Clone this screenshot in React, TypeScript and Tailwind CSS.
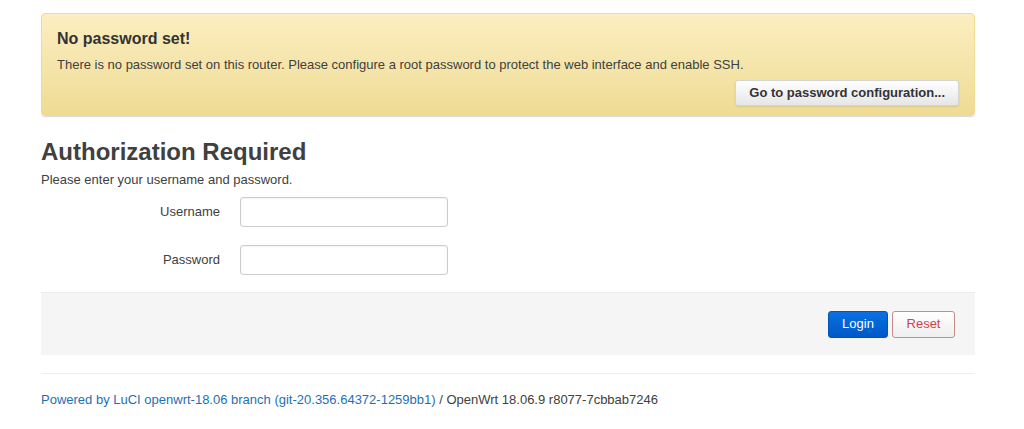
import React from 'react';

const App: React.FC = () => {
  return (
    <div className="min-h-screen bg-white font-['Liberation_Sans',Arial,sans-serif] text-[#404040]">
      <div className="mx-[41px] w-[934px] pt-[13px]">

        {/* alert */}
        <div className="rounded-[4px] border border-[#eedc94] bg-gradient-to-b from-[#fceec1] to-[#eedc94] px-[15px] pt-[16px] pb-[9px] shadow-[0_1px_1px_rgba(0,0,0,0.15)]">
          <h4 className="text-[16px] font-bold leading-[18px] text-[#333]">No password set!</h4>
          <p className="mt-[9px] text-[13px] leading-[16px] text-[#404040]">
            There is no password set on this router. Please configure a root password to protect the web interface and enable SSH.
          </p>
          <div className="mt-[7px] flex justify-end">
            <button className="h-[26px] rounded-[3px] border border-[#d4d4d4] bg-gradient-to-b from-white to-[#e6e6e6] px-[13px] text-[13px] font-bold text-[#333] shadow-[0_1px_2px_rgba(0,0,0,0.1)]">
              Go to password configuration...
            </button>
          </div>
        </div>

        {/* heading */}
        <h2 className="mt-[22px] text-[24px] font-bold leading-[28px] text-[#404040]">Authorization Required</h2>
        <p className="mt-[6px] text-[13px] leading-[16px]">Please enter your username and password.</p>

        {/* form */}
        <div className="mt-[9px] flex flex-col gap-[18px]">
          <div className="flex items-center">
            <label className="w-[179px] text-right text-[13px] text-[#404040]">Username</label>
            <input className="ml-[20px] h-[30px] w-[208px] rounded-[3px] border border-[#ccc] bg-white px-2 text-[13px] shadow-[inset_0_1px_2px_rgba(0,0,0,0.05)] outline-none" />
          </div>
          <div className="flex items-center">
            <label className="w-[179px] text-right text-[13px] text-[#404040]">Password</label>
            <input type="password" className="ml-[20px] h-[30px] w-[208px] rounded-[3px] border border-[#ccc] bg-white px-2 text-[13px] shadow-[inset_0_1px_2px_rgba(0,0,0,0.05)] outline-none" />
          </div>
        </div>

        {/* actions */}
        <div className="mt-[17px] flex h-[63px] items-center justify-end gap-[4px] border-t border-[#ececec] bg-[#f5f5f5] pr-[20px]">
          <button className="h-[27px] w-[60px] rounded-[3px] border border-[#0055b5] bg-gradient-to-b from-[#0a70e0] to-[#0058c8] text-[13px] text-white">
            Login
          </button>
          <button className="h-[27px] w-[63px] rounded-[3px] border border-[#c98a8a] bg-gradient-to-b from-white to-[#efefef] text-[13px] text-[#c44]">
            Reset
          </button>
        </div>

        {/* footer */}
        <div className="mt-[18px] border-t border-[#eee] pt-[18px] text-[13px] leading-[16px]">
          <a className="text-[#1f6fb5]">Powered by LuCI openwrt-18.06 branch (git-20.356.64372-1259bb1)</a>
          <span className="text-[#404040]"> / OpenWrt 18.06.9 r8077-7cbbab7246</span>
        </div>
      </div>
    </div>
  );
};

export default App;
